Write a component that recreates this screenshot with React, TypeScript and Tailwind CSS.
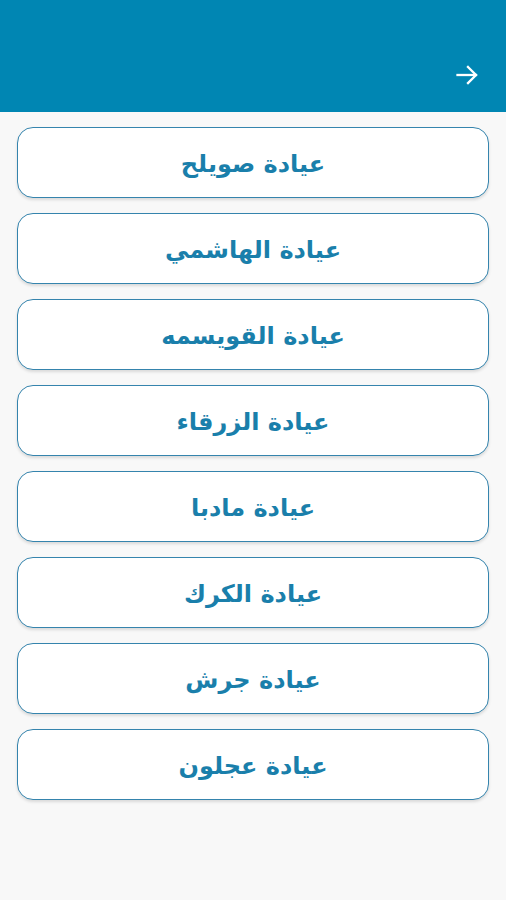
import React from "react";

const clinics = [
  "عيادة صويلح",
  "عيادة الهاشمي",
  "عيادة القويسمه",
  "عيادة الزرقاء",
  "عيادة مادبا",
  "عيادة الكرك",
  "عيادة جرش",
  "عيادة عجلون",
];

export default function App() {
  return (
    <div className="min-h-[900px] w-full bg-[#f8f8f8]" style={{ fontFamily: '"DejaVu Sans", "Noto Sans", sans-serif' }}>
      <header className="h-[112px] bg-[#0086b3] flex items-end justify-end pr-[28px] pb-[27px]">
        <svg width="22" height="20" viewBox="0 0 22 20" fill="none" stroke="white" strokeWidth="2.3" strokeLinecap="square">
          <path d="M1.5 10H20" />
          <path d="M12 2L20 10L12 18" />
        </svg>
      </header>
      <main dir="rtl" className="flex flex-col gap-[15px] px-[17px] pt-[15px]">
        {clinics.map((c) => (
          <button
            key={c}
            className="h-[71px] w-full rounded-[16px] border-[1.5px] border-[#3584ad] bg-white shadow-[0_2px_3px_rgba(0,0,0,0.12)] flex items-center justify-center pt-[3px] text-[24px] font-bold text-[#1a7fab]"
          >
            {c}
          </button>
        ))}
      </main>
    </div>
  );
}
